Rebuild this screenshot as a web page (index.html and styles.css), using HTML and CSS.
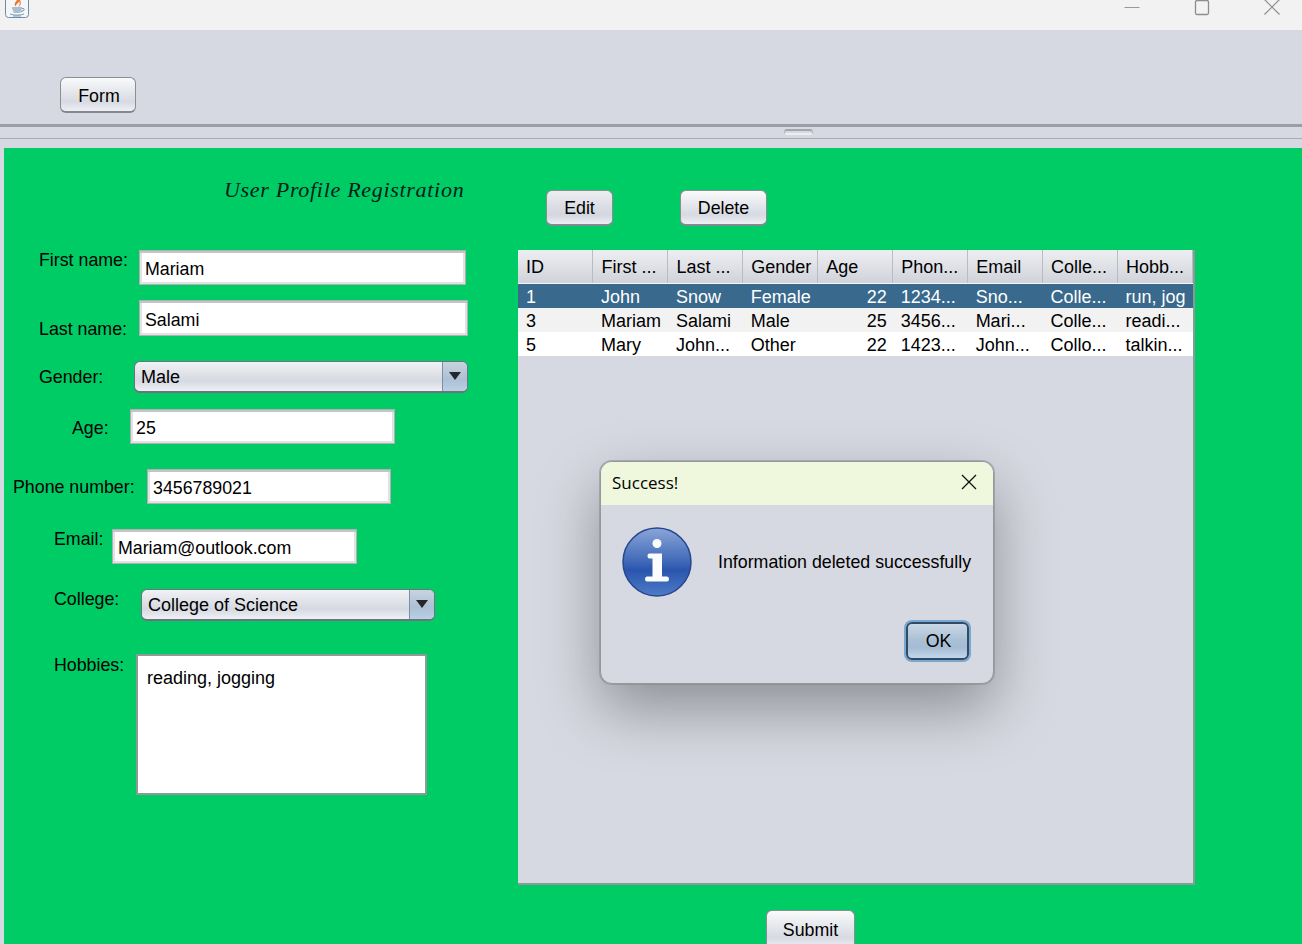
FILE: index.html
```html
<!DOCTYPE html>
<html>
<head>
    <title>User Profile Registration</title>
    <link rel="stylesheet" href="styles.css">
</head>
<body>
    <div class="titlebar">
        <svg class="java-icon" width="24" height="18" viewBox="0 0 24 18">
            <rect x="0.5" y="-6" width="23" height="23.5" rx="3" fill="#f4f6f8" stroke="#6f8ba5"/>
            <path d="M12 0 C10 3 8.500 4 11 6.500 C10.500 4.500 13 3.500 14.500 1 C14 3 16 4 13 7 C16 5.500 16.500 3 15 0 Z" fill="#e8782a"/>
            <path d="M7 8 H17 M7.500 10 H16.500 M8.500 12 H15.500" stroke="#5f86a8" stroke-width="1.100" fill="none"/>
            <path d="M17 8.500 C20 8 20 11 16 11.500" stroke="#5f86a8" fill="none"/>
            <path d="M5 14 C9 15.500 15 15.500 19 14 M8 16 H16" stroke="#7d9bb6" fill="none"/>
        </svg>
        <div class="win-controls">
            <svg width="16" height="16" viewBox="0 0 16 16"><path d="M0.500 7.500 H15.500" stroke="#999" fill="none"/></svg>
            <svg width="16" height="16" viewBox="0 0 16 16"><rect x="1.500" y="0.500" width="13" height="14" rx="1.500" stroke="#8c8c8c" stroke-width="1.300" fill="none"/></svg>
            <svg width="16" height="16" viewBox="0 0 16 16"><path d="M0.500 -0.500 L15.500 14.500 M15.500 -0.500 L0.500 14.500" stroke="#8c8c8c" stroke-width="1.200" fill="none"/></svg>
        </div>
    </div>

    <div class="toolbar">
        <button class="btn btn-form">Form</button>
    </div>

    <div class="divider">
        <div class="handle"></div>
        <div class="divider-line"></div>
    </div>

    <div class="main">
        <div class="form-col">
            <h2 class="form-title">User Profile Registration</h2>

            <div class="row row-first">
                <span class="lbl">First name:</span>
                <div class="field">Mariam</div>
            </div>
            <div class="row row-last">
                <span class="lbl">Last name:</span>
                <div class="field">Salami</div>
            </div>
            <div class="row row-gender">
                <span class="lbl">Gender:</span>
                <div class="combo">
                    <span class="combo-text">Male</span>
                    <span class="combo-arrow"><i class="tri"></i></span>
                </div>
            </div>
            <div class="row row-age">
                <span class="lbl">Age:</span>
                <div class="field">25</div>
            </div>
            <div class="row row-phone">
                <span class="lbl">Phone number:</span>
                <div class="field">3456789021</div>
            </div>
            <div class="row row-email">
                <span class="lbl">Email:</span>
                <div class="field">Mariam@outlook.com</div>
            </div>
            <div class="row row-college">
                <span class="lbl">College:</span>
                <div class="combo">
                    <span class="combo-text">College of Science</span>
                    <span class="combo-arrow"><i class="tri"></i></span>
                </div>
            </div>
            <div class="row row-hobbies">
                <span class="lbl">Hobbies:</span>
                <div class="textarea">reading, jogging</div>
            </div>
        </div>

        <div class="table-col">
            <div class="actions">
                <button class="btn btn-edit">Edit</button>
                <button class="btn btn-delete">Delete</button>
            </div>

            <div class="table-panel">
                <table>
                    <thead>
                        <tr>
                            <th>ID</th>
                            <th>First ...</th>
                            <th>Last ...</th>
                            <th>Gender</th>
                            <th>Age</th>
                            <th>Phon...</th>
                            <th>Email</th>
                            <th>Colle...</th>
                            <th>Hobb...</th>
                        </tr>
                    </thead>
                    <tbody>
                        <tr class="selected">
                            <td>1</td><td>John</td><td>Snow</td><td>Female</td><td class="num">22</td><td>1234...</td><td>Sno...</td><td>Colle...</td><td>run, jog</td>
                        </tr>
                        <tr class="alt">
                            <td>3</td><td>Mariam</td><td>Salami</td><td>Male</td><td class="num">25</td><td>3456...</td><td>Mari...</td><td>Colle...</td><td>readi...</td>
                        </tr>
                        <tr>
                            <td>5</td><td>Mary</td><td>John...</td><td>Other</td><td class="num">22</td><td>1423...</td><td>John...</td><td>Collo...</td><td>talkin...</td>
                        </tr>
                    </tbody>
                </table>
            </div>

            <button class="btn btn-submit">Submit</button>
        </div>
    </div>

    <div class="dialog">
        <div class="dialog-head">
            <span class="dialog-title">Success!</span>
            <svg class="dialog-close" width="16" height="16" viewBox="0 0 16 16"><path d="M1 1 L15 15 M15 1 L1 15" stroke="#111" stroke-width="1.300" fill="none"/></svg>
        </div>
        <div class="dialog-body">
            <svg class="info-icon" width="70" height="70" viewBox="0 0 70 70">
                <defs>
                    <linearGradient id="infoFill" x1="0" y1="0" x2="0" y2="1">
                        <stop offset="0" stop-color="#8aa6d8"/>
                        <stop offset="0.5" stop-color="#3f68b8"/>
                        <stop offset="0.62" stop-color="#2a55ad"/>
                        <stop offset="1" stop-color="#4f7bc8"/>
                    </linearGradient>
                </defs>
                <circle cx="35" cy="35" r="34" fill="url(#infoFill)" stroke="#27468f" stroke-width="1.500"/>
                <circle cx="35" cy="16.500" r="4.500" fill="#fbfcfe"/>
                <path d="M25.500 28.500 Q25.500 26.500 27.500 26.500 H40 V49.500 H45 Q47 49.500 47 52 Q47 54.500 45 54.500 H25 Q23 54.500 23 52 Q23 49.500 25 49.500 H30.500 V31.500 H27.500 Q25.500 31.500 25.500 28.500 Z" fill="#fbfcfe"/>
            </svg>
            <span class="dialog-msg">Information deleted successfully</span>
        </div>
        <div class="dialog-foot">
            <button class="btn btn-ok">OK</button>
        </div>
    </div>
</body>
</html>
```

FILE: styles.css
```css
html {
    overflow: hidden;
}

body {
    position: relative;
    width: 1302px;
    height: 944px;
    margin: 0;
    overflow: hidden;
    background-color: #d6d9e1;
    font-family: "Liberation Sans", Arial, sans-serif;
    font-size: 17.8px;
    color: #000;
}

/* window chrome */
.titlebar {
    display: flex;
    justify-content: space-between;
    height: 30px;
    background-color: #f2f2f2;
}

.java-icon {
    margin-left: 5px;
}

.win-controls {
    display: flex;
    gap: 54px;
    margin-right: 22px;
}

.toolbar {
    height: 94px;
    padding: 47px 0 0 60px;
    box-sizing: border-box;
}

.divider {
    height: 24px;
    box-sizing: border-box;
    border-top: 3px solid #9b9ea6;
    padding-top: 2px;
}

.handle {
    width: 29px;
    height: 6px;
    margin-left: 784px;
    box-sizing: border-box;
    border: 1px solid #b4b7be;
    border-top: 2px solid #a3a6ad;
    border-bottom: 2px solid #eceef2;
    border-radius: 4px;
}

.divider-line {
    height: 1px;
    margin-top: 3px;
    background-color: #a9acb3;
}

/* buttons */
.btn {
    display: block;
    height: 36px;
    padding: 2px 0 0;
    box-sizing: border-box;
    border: 1px solid #8a8d93;
    border-bottom: 2px solid #85888e;
    border-radius: 6px;
    background: linear-gradient(#f9fafb, #e6e8ed 40%, #d7dae2 72%, #eef0f5);
    font-family: inherit;
    font-size: 17.8px;
    color: #000;
}

.btn-form {
    width: 76px;
    padding-top: 3px;
    padding-left: 2px;
}

.btn-edit {
    width: 67px;
    margin-left: 28px;
    background: linear-gradient(#eceef1, #dcdee5 45%, #d3d6de 72%, #eceef4);
}

.btn-delete {
    width: 87px;
    margin-left: 67px;
}

.btn-submit {
    width: 89px;
    height: 40px;
    margin: 25px 0 0 248px;
}

.btn-ok {
    width: 63px;
    height: 38px;
    padding: 0 0 0 2px;
    border: 2px solid #2f4b66;
    border-radius: 6px;
    background: linear-gradient(#c9d7e6, #a9bfd3 50%, #a4bdd4 70%, #c3d6e9);
    box-shadow: 0 0 0 2px #7aa7d0;
}

/* main green area */
.main {
    display: flex;
    height: 796px;
    margin-left: 4px;
    background-color: #00cc66;
    overflow: hidden;
}

.form-col {
    width: 514px;
    flex-shrink: 0;
}

.form-title {
    height: 102px;
    margin: 0;
    padding: 28px 0 0 220px;
    box-sizing: border-box;
    font-family: "Liberation Serif", serif;
    font-style: italic;
    font-weight: normal;
    font-size: 22px;
    line-height: 28px;
    letter-spacing: 0.7px;
    color: #03201a;
}

.row {
    display: flex;
    align-items: flex-start;
}

.lbl {
    flex-shrink: 0;
    line-height: 20px;
    white-space: nowrap;
}

.field {
    height: 35px;
    padding: 2px 0 0 5px;
    box-sizing: border-box;
    border: 1px solid #aeb1b0;
    box-shadow: inset 0 2px 0 #c4c5c8, inset 2px 0 0 #e2e2e5, inset -2px -2px 0 #e2e2e5;
    background-color: #fff;
    line-height: 33px;
}

.combo {
    display: flex;
    justify-content: space-between;
    height: 32px;
    box-sizing: border-box;
    border: 1px solid #6c7280;
    border-bottom-width: 2px;
    border-radius: 6px;
    background: linear-gradient(#f1f2f6, #e2e4ea 35%, #d6d9e1 65%, #eef0f5);
    font-size: 18px;
    overflow: hidden;
}

.combo-text {
    padding-left: 6px;
    line-height: 31px;
}

.combo-arrow {
    display: flex;
    justify-content: center;
    width: 25px;
    box-sizing: border-box;
    padding-top: 10px;
    border-left: 1px solid #7f8fa3;
    background: linear-gradient(#c9d3df, #acc0d6 60%, #bcd0e4);
}

.tri {
    width: 0;
    height: 0;
    border-left: 6px solid transparent;
    border-right: 6px solid transparent;
    border-top: 8px solid #23262b;
}

.textarea {
    width: 291px;
    height: 141px;
    padding: 12px 9px;
    box-sizing: border-box;
    border: 2px solid #8f9a98;
    background-color: #fff;
    font-size: 18px;
    line-height: 20px;
}

/* each row sits at its own spot, the form was laid out by hand */
.row-first {
    padding-left: 35px;
}

.row-first .lbl {
    width: 100px;
}

.row-first .field {
    width: 327px;
}

.row-last {
    margin-top: 15px;
    padding-left: 35px;
}

.row-last .lbl {
    width: 100px;
    margin-top: 19px;
}

.row-last .field {
    width: 329px;
    height: 36px;
    padding-top: 3px;
}

.row-gender {
    margin-top: 22px;
    padding-left: 35px;
}

.row-gender .lbl {
    width: 95px;
    margin-top: 6px;
}

.row-gender .combo {
    width: 334px;
}

.row-age {
    margin-top: 16px;
    padding-left: 68px;
}

.row-age .lbl {
    width: 58px;
    margin-top: 9px;
}

.row-age .field {
    width: 265px;
}

.row-phone {
    margin-top: 25px;
    padding-left: 9px;
}

.row-phone .lbl {
    width: 134px;
    margin-top: 8px;
}

.row-phone .field {
    width: 244px;
}

.row-email {
    margin-top: 25px;
    padding-left: 50px;
}

.row-email .lbl {
    width: 58px;
}

.row-email .field {
    width: 245px;
}

.row-college {
    margin-top: 25px;
    padding-left: 50px;
}

.row-college .lbl {
    width: 87px;
}

.row-college .combo {
    width: 294px;
}

.row-hobbies {
    margin-top: 33px;
    padding-left: 50px;
}

.row-hobbies .lbl {
    width: 82px;
    margin-top: 1px;
}

/* table side */
.table-col {
    flex: 1;
}

.actions {
    display: flex;
    padding-top: 42px;
}

.table-panel {
    width: 677px;
    height: 635px;
    margin-top: 24px;
    box-sizing: border-box;
    border-right: 2px solid #8a9a98;
    border-bottom: 2px solid #8a9a98;
    background-color: #d6d9e1;
    font-size: 18px;
}

table {
    width: 675px;
    table-layout: fixed;
    border-collapse: collapse;
}

th {
    height: 33px;
    padding: 3px 8px 0;
    box-sizing: border-box;
    border-right: 1px solid #b9bcc3;
    border-bottom: 1px solid #f4f5f7;
    background: linear-gradient(#edeef1, #dfe1e6 50%, #cfd2d9);
    font-weight: normal;
    text-align: left;
    white-space: nowrap;
    overflow: hidden;
}

td {
    height: 24px;
    padding: 2px 8px 0;
    box-sizing: border-box;
    background-color: #fff;
    line-height: 22px;
    white-space: nowrap;
    overflow: hidden;
}

.alt td {
    background-color: #f2f2f2;
}

.selected td {
    background-color: #39698c;
    color: #fff;
}

td.num {
    padding-right: 6px;
    text-align: right;
}

/* message dialog */
.dialog {
    position: absolute;
    left: 600px;
    top: 461px;
    width: 394px;
    height: 223px;
    box-sizing: border-box;
    border: 1px solid #96989d;
    border-radius: 12px;
    background-color: #d6d9e1;
    box-shadow: 0 0 0 1px rgba(130, 132, 138, 0.5), 0 25px 60px rgba(0, 0, 0, 0.34);
    overflow: hidden;
}

.dialog-head {
    display: flex;
    justify-content: space-between;
    align-items: center;
    height: 43px;
    padding: 0 16px 3px 11px;
    box-sizing: border-box;
    background-color: #eff8dc;
}

.dialog-title {
    font-family: "Open Sans", sans-serif;
    font-size: 17px;
}

.dialog-body {
    display: flex;
    align-items: center;
    height: 70px;
    margin-top: 22px;
    padding-left: 21px;
}

.dialog-msg {
    margin-left: 26px;
}

.dialog-foot {
    display: flex;
    justify-content: flex-end;
    margin-top: 25px;
    padding-right: 24px;
}
```
